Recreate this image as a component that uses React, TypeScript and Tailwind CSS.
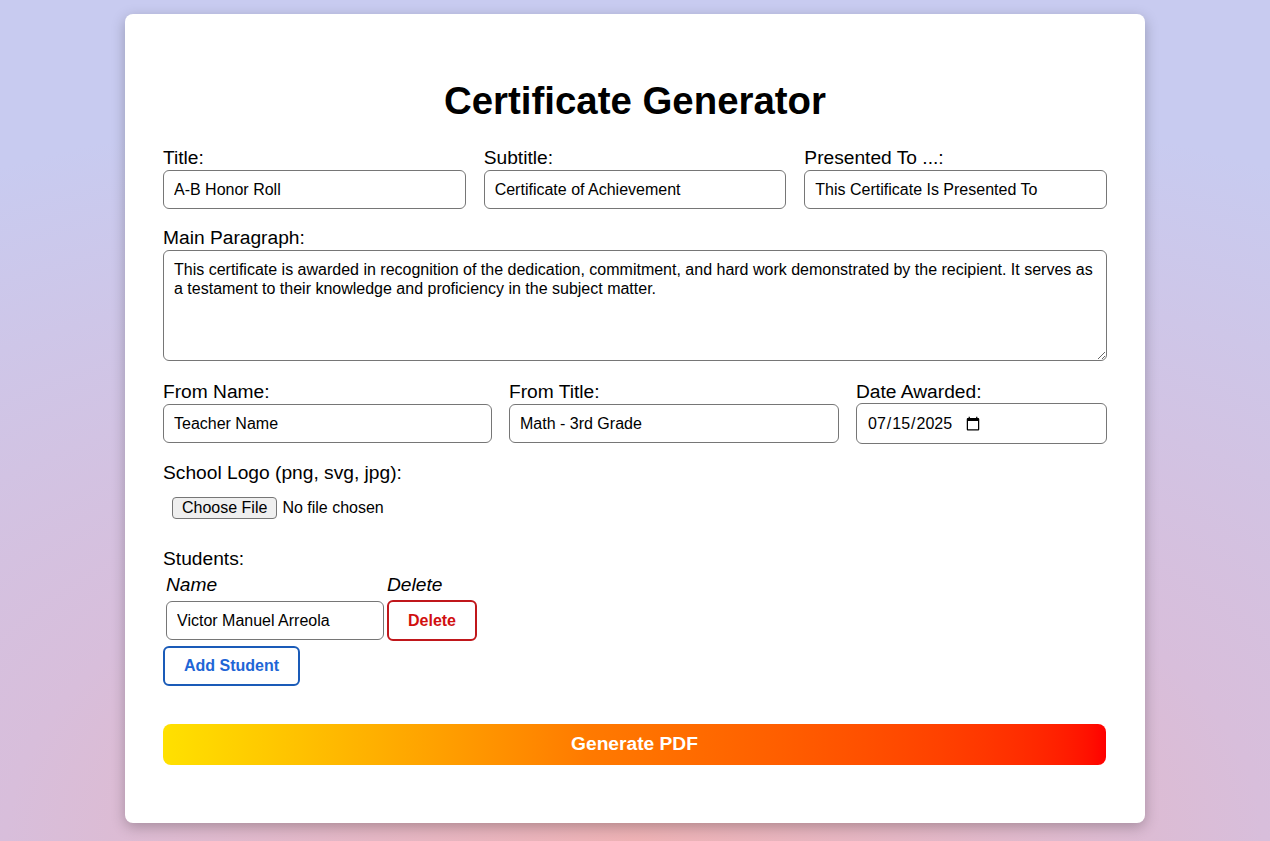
import { useState } from "react";

const labelCls = "mb-[3px] text-[19.2px] leading-[18px] text-black";
const inputCls =
	"h-[39px] w-full rounded-md border border-[#767676] bg-white px-[10px] text-[16px] text-black outline-none";

function Field({ label, value, type = "text" }: { label: string; value: string; type?: string }) {
	return (
		<div className="flex min-w-0 flex-col">
			<label className={labelCls}>{label}</label>
			<input type={type} defaultValue={value} className={inputCls} />
		</div>
	);
}

export default function App() {
	const [students] = useState(["Victor Manuel Arreola"]);

	return (
		<div
			className="min-h-[841px] w-full bg-[radial-gradient(ellipse_110%_90%_at_50%_100%,#eeb2b5_0%,#d8bedb_45%,#c8cbf0_100%)] pt-[14px] pb-[18px]"
			style={{ fontFamily: '"Liberation Sans", Arial, sans-serif' }}
		>
			<div className="mx-auto w-[1020px] rounded-lg bg-white px-[38px] pt-[65px] pb-[58px] shadow-[0_4px_14px_rgba(0,0,0,0.25)]">
				<h1 className="mb-[26px] text-center text-[38.4px] leading-[44px] font-bold text-black">
					Certificate Generator
				</h1>

				<div className="grid grid-cols-3 gap-x-[18px]">
					<Field label="Title:" value="A-B Honor Roll" />
					<Field label="Subtitle:" value="Certificate of Achievement" />
					<Field label="Presented To ...:" value="This Certificate Is Presented To" />
				</div>

				<div className="mt-[20px] flex flex-col">
					<label className={labelCls}>Main Paragraph:</label>
					<textarea
						defaultValue="This certificate is awarded in recognition of the dedication, commitment, and hard work demonstrated by the recipient. It serves as a testament to their knowledge and proficiency in the subject matter."
						className="h-[111px] w-full rounded-md border border-[#767676] px-[10px] py-[9px] text-[16px] leading-[19px] text-black outline-none"
					/>
				</div>

				<div className="mt-[22px] grid grid-cols-[329px_330px_251px] items-start gap-x-[17px]">
					<Field label="From Name:" value="Teacher Name" />
					<Field label="From Title:" value="Math - 3rd Grade" />
					<div className="flex flex-col">
						<label className={labelCls}>Date Awarded:</label>
						<input
							type="date"
							defaultValue="2025-07-15"
							className="-mt-px h-[41px] w-full rounded-md border border-[#767676] px-[10px] text-[16px] text-black outline-none [&::-webkit-calendar-picker-indicator]:m-0 [&::-webkit-calendar-picker-indicator]:-ml-[17px] [&::-webkit-datetime-edit]:flex-none"
						/>
					</div>
				</div>

				<div className="mt-[20px] flex flex-col items-start">
					<label className={labelCls}>School Logo (png, svg, jpg):</label>
					<input
						type="file"
						className="mt-[12px] ml-[9px] text-[16px] leading-[18px] text-black file:mr-[5px] file:rounded-sm file:border file:border-[#767676] file:bg-[#efefef] file:px-[9px] file:py-[1px] file:text-[16px] file:leading-[18px]"
					/>
				</div>

				<div className="mt-[31px]">
					<div className={labelCls}>Students:</div>
					<table className="mt-[2px] border-separate border-spacing-[3px]">
						<thead>
							<tr>
								<th className="pb-[2px] text-left text-[19.2px] leading-[21px] font-normal italic text-black">Name</th>
								<th className="pb-[2px] text-left text-[19.2px] leading-[21px] font-normal italic text-black">Delete</th>
							</tr>
						</thead>
						<tbody>
							{students.map((s) => (
								<tr key={s}>
									<td>
										<input defaultValue={s} className="h-[39px] w-[218px] rounded-md border border-[#767676] px-[10px] text-[16px] text-black outline-none" />
									</td>
									<td>
										<button className="h-[41px] w-[90px] rounded-md border-2 border-[#c0171b] bg-white text-[16px] font-bold text-[#d10f0f]">
											Delete
										</button>
									</td>
								</tr>
							))}
						</tbody>
					</table>
					<button className="mt-[2px] h-[40px] w-[137px] rounded-md border-2 border-[#1a5bb8] bg-white text-[16px] font-bold text-[#1f66d6]">
						Add Student
					</button>
				</div>

				<button className="mt-[38px] h-[41px] w-[943px] rounded-lg bg-gradient-to-r from-[#ffe100] via-[#ff7a00] via-45% to-[#ff0000] text-[19.2px] font-bold text-white">
					Generate PDF
				</button>
			</div>
		</div>
	);
}
